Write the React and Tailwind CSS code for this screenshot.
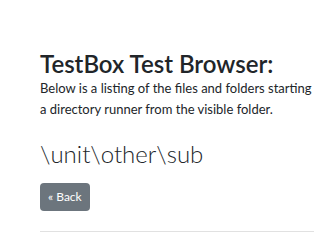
export default function App() {
  return (
    <div className="w-[314px] h-[250px] overflow-hidden bg-white pl-[40px] pt-[50px] text-[#212529]" style={{ fontFamily: 'Lato, sans-serif' }}>
      <h3 className="text-[24px] leading-[28px] font-semibold whitespace-nowrap">TestBox Test Browser:</h3>
      <p className="text-[13px] leading-[21px] whitespace-nowrap">
        Below is a listing of the files and folders starting from the root. You can run
        <br />
        a directory runner from the visible folder.
      </p>
      <h2 className="mt-[19px] text-[24px] leading-[29px] font-light">\unit\other\sub</h2>
      <button className="mt-[15px] block h-[28px] px-[8px] rounded-[4px] bg-[#6c757d] text-white text-[12px] leading-[18px]">« Back</button>
      <hr className="mt-[20px] border-0 border-t border-[#e1e1e1]" />
    </div>
  );
}
